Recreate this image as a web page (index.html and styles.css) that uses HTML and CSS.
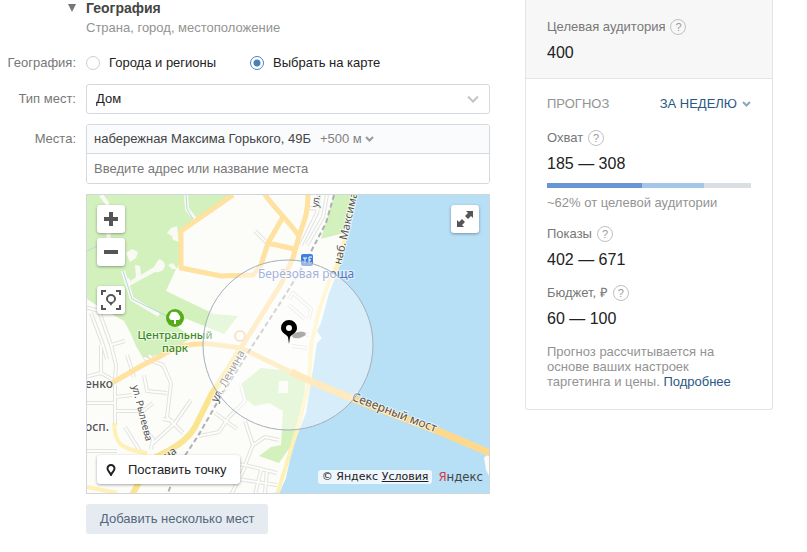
FILE: index.html
```html
<!DOCTYPE html>
<html lang="ru">
<head>
    <meta charset="UTF-8">
    <meta name="viewport" content="width=device-width, initial-scale=1.0">
    <title>География</title>
    <link rel="stylesheet" href="styles.css">
</head>
<body>
    <div class="page">
        <form class="form">
            <div class="form-head">
                <span class="arrow" aria-hidden="true"></span>
                <div class="form-title">
                    <h2>География</h2>
                    <p>Страна, город, местоположение</p>
                </div>
            </div>

            <div class="row row-radio" role="radiogroup" aria-labelledby="geoLabel">
                <span class="label" id="geoLabel">География:</span>
                <div class="radios">
                    <label><input type="radio" name="geo"> Города и регионы</label>
                    <label><input type="radio" name="geo" checked> Выбрать на карте</label>
                </div>
            </div>

            <div class="row">
                <label class="label" for="placeType">Тип мест:</label>
                <div class="select-box">
                    <select id="placeType">
                        <option>Дом</option>
                    </select>
                    <svg class="select-arrow" width="12" height="8" viewBox="0 0 12 8"><path d="M1 1.5l5 5 5-5"/></svg>
                </div>
            </div>

            <div class="row">
                <label class="label" for="address">Места:</label>
                <div class="places">
                    <div class="place">
                        <span>набережная Максима Горького, 49Б</span>
                        <button type="button" class="radius">+500 м<svg width="9" height="6" viewBox="0 0 9 6"><path d="M1 1l3.500 3.500L8 1"/></svg></button>
                    </div>
                    <input type="text" id="address" placeholder="Введите адрес или название места">
                </div>
            </div>

            <div class="row">
                <div class="content map">
                    <svg class="map-canvas" viewBox="0 0 402 298" preserveAspectRatio="xMinYMin slice">
                        <defs>
                            <path id="streets" d="M-2 112L12 116 24 150 29 170 28 184M4 118L16 150 20 164M-2 182L14 178 28 186M14 150L14 178M24 150L38 146M0 208L28 208M28 190L28 230M28 216L56 216 66 208M28 202L45 200M57 180L60 196 80 198M57 163L76 170 84 188 80 222 96 238M38 232L54 258M56 232L66 244 64 254M104 205L88 228 64 250M76 224L86 226M40 160L47 182M0 256L30 256M62 160L68 166M112 241L132 237 142 222 158 206 154 190M128 218L150 234M158 226L166 250 158 270M166 250L178 242 192 245M158 270L190 278M104 262L158 270M144 300L158 272M168 300L174 275M150 284L190 290M180 275L178 298M168 36L180 48M232 0L230 18 214 50M240 0L236 22 220 50M222 13L232 14"/>
                            <path id="lanes" d="M202 104L206 98 224 114 222 124M202 110L218 124M205 136L222 140M205 151L220 153"/>
                            <path id="mainRoads" d="M177 -2C186 12 200 24 212 41M196 22L181 48 174 70 166 80 134 81 94 73 94 36 146 0M181 48L207 54M221 -2C221 20 217 26 212 41L206 63 194 89 154 153M25 188L54 171 74 161C90 150 106 148 124 149L154 153 204 177"/>
                            <path id="softRoads" d="M259 40L251 69 241 89 231 119 224 151 222 188 212 228 190 300M27 228C28 248 32 254 60 258M0 292L30 298"/>
                        </defs>
                        <rect class="land" width="402" height="298"/>
                        <path class="park" d="M0 0H146L94 35V68L89 74 79 96 127 119 151 121 137 139 100 124 84 128 106 142 80 158 56 163 49 151 44 139 37 126 14 113 0 104Z"/>
                        <path class="park" d="M247 0H270L257 38 234 44Z"/>
                        <path class="park" d="M154 189L174 173 195 175 219 184 216 211 206 248 192 268 172 261 184 252 194 250 196 216 182 208 167 211 158 203Z"/>
                        <path class="clearing" d="M90 31l-6 2-4 5 5 3 1 4 6 2zM86 68l-5 2 4 4 5 0zM72 64a7 6 0 1 1-4 13L44 90l-3-2 8-6-1-12 5 1 1 9 13-8zM39 58l6-4 6 3-2 6-6 4zM192 186h9v12h-10z"/>
                        <path class="path" d="M36 76L45 104 72 120M44 90L40 84M99 0L100 14 108 24M14 0L20 8 22 50"/>
                        <path class="brook" d="M36 76L45 104 90 126M99 0L100 14 106 24M0 56L12 50"/>
                        <path class="water" d="M270 -1L254 68 242 98 234 128 230 136 235 143 230 148 227 168 219 218 206 251 199 283 192 299H403V-1Z"/>
                        <path class="land" d="M403 256l-6 7 2 12 4 8z"/>
                        <use class="street-edge" href="#streets"/>
                        <use class="street" href="#streets"/>
                        <use class="street-edge" href="#lanes"/>
                        <use class="street" href="#lanes"/>
                        <use class="soft-road" href="#softRoads"/>
                        <path class="lenina" d="M154 153L140 176 124 200 108 232C100 246 86 254 65 264L45 300"/>
                        <use class="main-road" href="#mainRoads"/>
                        <path class="bridge" d="M204 177L219 184 266 204 356 238 403 258"/>
                        <circle class="roundabout" cx="153" cy="141" r="5"/>
                        <path class="rail" d="M247 0L239 28 219 66 199 99 164 153 134 201 111 241 91 271 81 298"/>
                        <g class="tree">
                            <circle cx="88" cy="123" r="9"/>
                            <path d="M87 129v-4h-3a3 3 0 0 1-1-5 3 3 0 0 1 4-3 4 4 0 0 1 5 3 3 3 0 0 1 0 5h-3v4z"/>
                        </g>
                        <g class="station">
                            <rect x="214" y="59" width="12" height="12" rx="2"/>
                            <path d="M216 63h4M218 63v5M222 62v6M222 65h2M222 62h3M222 68h3"/>
                        </g>
                        <g class="names">
                            <text class="name-park" x="88" y="144">Центральный</text>
                            <text class="name-park" x="88" y="157">парк</text>
                            <text class="name-station" x="219" y="83">Берёзовая роща</text>
                            <text class="name-edge" x="-2" y="193">енко</text>
                            <text class="name-edge" x="-2" y="236">осп.</text>
                            <text class="name-small" transform="translate(45 191) rotate(76)">ул. Рылеева</text>
                            <text class="name-street" transform="translate(130 208) rotate(-61)">ул. Ленина</text>
                            <text class="name-street" transform="translate(57 280) rotate(-34)">Ленина</text>
                            <text class="name-street" transform="translate(254 70) rotate(-77)">наб. Максима</text>
                            <text class="name-small" transform="translate(231 13) rotate(-80)">ул.</text>
                            <text class="name-bridge" transform="translate(264 205) rotate(21)">Северный мост</text>
                        </g>
                        <circle class="zone" cx="201" cy="150" r="85"/>
                        <ellipse class="pin-shadow" cx="212" cy="140" rx="7" ry="3" transform="rotate(-12 212 140)"/>
                        <path class="pin" fill-rule="evenodd" d="M202 125a8 8 0 0 0-8 8c0 5 5 6 7 9l1 7 1-7c2-3 7-4 7-9a8 8 0 0 0-8-8zm0 5a3 3 0 1 1 0 6 3 3 0 0 1 0-6z"/>
                    </svg>

                    <div class="map-left">
                        <button type="button" class="map-btn" aria-label="Приблизить"><svg width="14" height="14" viewBox="0 0 14 14"><path d="M5 0h4v5h5v4H9v5H5V9H0V5h5z"/></svg></button>
                        <button type="button" class="map-btn" aria-label="Отдалить"><svg width="14" height="14" viewBox="0 0 14 14"><path d="M0 5h14v4H0z"/></svg></button>
                        <button type="button" class="map-btn map-locate" aria-label="Моё местоположение"><svg width="20" height="20" viewBox="0 0 20 20"><path d="M0 0h5v2H2v3H0zM15 0h5v5h-2V2h-3zM0 15h2v3h3v2H0zM18 15h2v5h-5v-2h3z"/><path fill-rule="evenodd" d="M10 4a5 5 0 0 0-5 5c0 3 4 4 5 7 1-3 5-4 5-7a5 5 0 0 0-5-5zm0 2a3 3 0 1 1 0 6 3 3 0 0 1 0-6z"/></svg></button>
                    </div>
                    <button type="button" class="map-btn map-full" aria-label="На весь экран"><svg width="16" height="16" viewBox="0 0 16 16"><path d="M9 0h7v7l-2-2-3 3-3-3 3-3zM0 9l2 2 3-3 3 3-3 3 2 2H0z"/></svg></button>
                    <button type="button" class="map-point"><svg width="10" height="12" viewBox="0 0 10 12"><path d="M5 1a3.500 3.500 0 0 0-3.500 3.500C1.500 7 4 8 5 11c1-3 3.500-4 3.500-6.500A3.500 3.500 0 0 0 5 1z"/></svg>Поставить точку</button>
                    <div class="map-copy">
                        <span class="terms">© Яндекс <a href="#">Условия</a></span>
                        <span class="yandex"><b>Я</b>ндекс</span>
                    </div>
                </div>
            </div>

            <div class="row">
                <div class="content"><button type="button" class="add-btn">Добавить несколько мест</button></div>
            </div>
        </form>

        <aside class="card">
            <div class="audience">
                <div class="stat-label">Целевая аудитория <button type="button" class="help">?</button></div>
                <div class="stat-value">400</div>
            </div>
            <div class="forecast">
                <div class="forecast-head">
                    <h3>ПРОГНОЗ</h3>
                    <button type="button" class="period">ЗА НЕДЕЛЮ<svg width="9" height="6" viewBox="0 0 9 6"><path d="M1 1l3.500 3.500L8 1"/></svg></button>
                </div>
                <div class="stat">
                    <div class="stat-label">Охват <button type="button" class="help">?</button></div>
                    <div class="stat-value">185 — 308</div>
                    <div class="bar">
                        <div class="bar-max" style="width: 77%"></div>
                        <div class="bar-min" style="width: 46.500%"></div>
                    </div>
                    <div class="bar-text">~62% от целевой аудитории</div>
                </div>
                <div class="stat">
                    <div class="stat-label">Показы <button type="button" class="help">?</button></div>
                    <div class="stat-value">402 — 671</div>
                </div>
                <div class="stat">
                    <div class="stat-label">Бюджет, ₽ <button type="button" class="help">?</button></div>
                    <div class="stat-value">60 — 100</div>
                </div>
                <p class="note">Прогноз рассчитывается на основе ваших настроек таргетинга и цены. <a href="#">Подробнее</a></p>
            </div>
        </aside>
    </div>
</body>
</html>
```
FILE: styles.css
```css
* {
    box-sizing: border-box;
}

body {
    margin: 0;
    background: #fff;
    color: #222;
    font-family: "Liberation Sans", Arial, sans-serif;
    font-size: 13px;
    line-height: 20px;
}

h2, h3, p {
    margin: 0;
}

button, input, select {
    font: inherit;
    color: inherit;
    margin: 0;
}

button {
    display: inline-flex;
    align-items: center;
    padding: 0;
    border: none;
    background: none;
    cursor: pointer;
}

a {
    color: #2a5885;
    text-decoration: none;
}

.page {
    display: flex;
    align-items: flex-start;
    gap: 35px;
    padding-right: 34px;
}

/* left form */
.form {
    flex: 1;
    min-width: 0;
    display: flex;
    flex-direction: column;
    gap: 10px;
}

.form-head, .row {
    display: grid;
    grid-template-columns: 76px minmax(0, 1fr);
    column-gap: 10px;
}

.arrow {
    justify-self: end;
    margin-top: 4px;
    border: 4px solid transparent;
    border-top: 8px solid #777;
    border-bottom: none;
    height: 8px;
}

h2 {
    font-size: 14px;
    line-height: 16px;
    color: #444;
}

.form-title p {
    padding-top: 2px;
    color: #939393;
}

.label {
    text-align: right;
    line-height: 30px;
    color: #777;
}

.row-radio {
    align-items: center;
    height: 26px;
    padding-bottom: 4px;
}

.radios {
    display: flex;
    gap: 34px;
}

.radios label {
    display: flex;
    align-items: center;
    gap: 9px;
}

.radios input {
    appearance: none;
    width: 14px;
    height: 14px;
    border: 1px solid #c5d0db;
    border-radius: 50%;
    background: #fff;
}

.radios input:checked {
    border-color: #5181b8;
    background: radial-gradient(circle, #4a7fb8 3px, #fff 4px);
}

.select-box {
    display: grid;
    align-items: center;
}

.select-box > * {
    grid-area: 1 / 1;
}

select {
    appearance: none;
    width: 100%;
    height: 30px;
    padding: 0 9px;
    border: 1px solid #d3d9de;
    border-radius: 3px;
    background: #fff;
}

.select-arrow {
    justify-self: end;
    margin-right: 11px;
    pointer-events: none;
}

.select-arrow path, .radius path, .period path {
    fill: none;
    stroke: #c0c5ca;
    stroke-width: 2;
}

.places {
    border: 1px solid #d3d9de;
    border-radius: 3px;
    overflow: hidden;
}

.place {
    display: flex;
    align-items: center;
    gap: 9px;
    height: 29px;
    padding: 0 7px;
    border-bottom: 1px solid #d3d9de;
    background: #fafbfc;
    color: #444;
}

.radius {
    gap: 3px;
    color: #828282;
}

.radius path {
    stroke: #999;
}

.places input {
    display: block;
    width: 100%;
    height: 29px;
    padding: 0 7px;
    border: none;
    outline: none;
}

.places input::placeholder {
    color: #777;
}

.content {
    grid-column: 2;
}

.add-btn {
    height: 30px;
    padding: 0 14px;
    border-radius: 3px;
    background: #e5ebf1;
    color: #55677d;
}

/* map */
.map {
    position: relative;
    height: 300px;
    border: 1px solid #d0d6da;
    overflow: hidden;
}

.map-canvas {
    display: block;
    width: 100%;
    height: 100%;
}

.map-canvas path, .map-canvas use {
    stroke-linejoin: round;
}

.land { fill: #fcfcf9; }
.park { fill: #d3f1bd; }
.clearing { fill: #fafaf5; }
.water { fill: #b7dff5; }

.path, .brook, .street, .street-edge, .soft-road, .lenina, .main-road, .bridge, .rail, .roundabout {
    fill: none;
}

.path { stroke: #fafaf5; stroke-width: 4; }
.brook { stroke: #b4d8de; stroke-width: 1; }
.street-edge { stroke: #e2e2df; stroke-width: 4; }
.street { stroke: #fdfdfb; stroke-width: 2; }
.soft-road { stroke: #fff0b5; stroke-width: 4; }
.lenina { stroke: #fbe591; stroke-width: 6; }
.main-road { stroke: #ffe1a0; stroke-width: 5; }
.bridge { stroke: #ffd98b; stroke-width: 7; }
.roundabout { stroke: #f3cfa2; stroke-width: 2; }
.rail { stroke: #b0b0b8; stroke-width: 2; stroke-dasharray: 5 3; }
.tree circle { fill: #55ab18; }
.tree path { fill: #fff; }
.station rect { fill: #3f80dc; }
.station path { fill: none; stroke: #fff; stroke-width: 1; }

.zone {
    fill: #fff;
    fill-opacity: 0.45;
    stroke: #a4b0ba;
}

.pin { fill: #000; }
.pin-shadow { fill: #777; opacity: 0.6; }

.names {
    font-family: "Noto Sans", "Open Sans", sans-serif;
    font-size: 11px;
    fill: #555;
    stroke: #fff;
    stroke-width: 2;
    stroke-opacity: 0.6;
    paint-order: stroke;
}

.name-park {
    fill: #3b8a25;
    font-weight: 500;
    text-anchor: middle;
}

.name-station {
    fill: #5572c0;
    font-size: 12px;
    text-anchor: middle;
}

.name-edge {
    font-size: 12px;
    font-weight: 500;
}

.name-small { font-size: 10px; }
.name-bridge { font-size: 12px; }

.map-left {
    position: absolute;
    top: 10px;
    left: 10px;
    display: flex;
    flex-direction: column;
    gap: 5px;
}

.map-btn, .map-point {
    border-radius: 3px;
    background: #fff;
    box-shadow: 0 1px 3px rgba(0, 0, 0, 0.35);
}

.map-btn {
    justify-content: center;
    width: 28px;
    height: 28px;
    fill: #555;
}

.map-locate {
    margin-top: 15px;
}

.map-full {
    position: absolute;
    top: 10px;
    right: 10px;
}

.map-point {
    position: absolute;
    left: 10px;
    bottom: 9px;
    gap: 12px;
    height: 29px;
    padding: 0 14px 0 9px;
}

.map-point path {
    fill: none;
    stroke: #222;
    stroke-width: 2;
}

.map-copy {
    position: absolute;
    right: 6px;
    bottom: 6px;
    display: flex;
    align-items: center;
    gap: 6px;
}

.terms {
    padding: 0 4px;
    border-radius: 3px;
    background: rgba(255, 255, 255, 0.75);
    font: 11px/14px "DejaVu Sans", sans-serif;
    color: #222;
}

.terms a {
    color: #222;
    text-decoration: underline;
}

.yandex {
    font: 13px/20px "Liberation Sans Narrow", "DejaVu Sans Condensed", sans-serif;
    color: #444;
}

.yandex b {
    font-weight: normal;
    color: #d8394c;
}

/* right card */
.card {
    width: 248px;
    border: 1px solid #e3e4e8;
    border-top: none;
    border-radius: 0 0 3px 3px;
}

.audience {
    padding: 17px 21px 13px;
    border-bottom: 1px solid #e3e4e8;
    background: #f7f7f7;
}

.forecast {
    padding: 15px 21px 20px;
}

.forecast-head {
    display: flex;
    justify-content: space-between;
    padding-bottom: 3px;
}

h3 {
    font-size: 13px;
    font-weight: normal;
    color: #939393;
}

.period {
    gap: 5px;
    color: #2a5885;
}

.period path {
    stroke: #8fa5bb;
}

.stat {
    padding-top: 11px;
}

.stat-label {
    display: flex;
    align-items: center;
    gap: 5px;
    color: #777;
}

.help {
    justify-content: center;
    width: 16px;
    height: 16px;
    border: 1px solid #c0c0c0;
    border-radius: 50%;
    font-size: 11px;
    color: #999;
}

.stat-value {
    padding-top: 4px;
    font-size: 16px;
    line-height: 24px;
}

.bar {
    display: grid;
    height: 5px;
    margin: 7px 0 5px;
    background: #dadfe2;
}

.bar div {
    grid-area: 1 / 1;
}

.bar-max { background: #a5c6e6; }
.bar-min { background: #6797d3; }

.bar-text {
    color: #939393;
}

.note {
    padding-top: 13px;
    line-height: 15px;
    color: #939393;
}
```
